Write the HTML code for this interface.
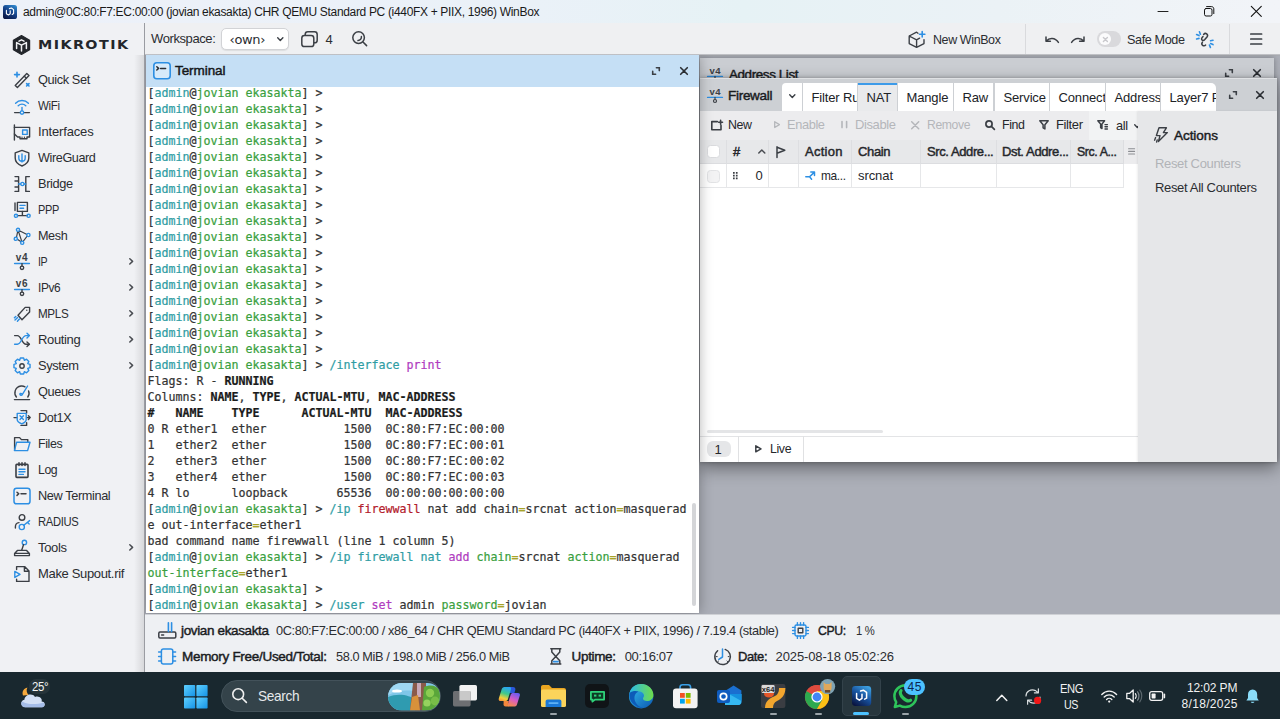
<!DOCTYPE html>
<html><head><meta charset="utf-8"><title>WinBox</title>
<style>
*{box-sizing:border-box;margin:0;padding:0}
html,body{width:1280px;height:719px;overflow:hidden;background:#acafb8;font-family:"Liberation Sans",sans-serif;color:#1f2023}
.abs{position:absolute}
svg{display:block;overflow:visible}
#termbody{left:0;top:32px;width:553px;height:526px;overflow:hidden;background:#fff}
pre.tl{position:absolute;left:1.5px;-webkit-text-stroke:0.22px;font-family:"DejaVu Sans Mono","Liberation Mono",monospace;font-size:11.63px;line-height:16px;height:16px;color:#333;white-space:pre}
pre.tl b{font-weight:bold;color:#1b1b1b}
.c{color:#2f9da4}.g{color:#3a9f40}.m{color:#b03cc0}.r{color:#b3202c}.y{color:#a8a428}
</style></head>
<body>
<div class="abs" style="left:0px;top:0px;width:1280px;height:23px;background:linear-gradient(90deg,#edf1f9 0%,#eaf1f8 42%,#e6f2f5 58%,#ebf2f6 78%,#f2f4f8 100%);"></div>
<div class="abs" style="left:3px;top:5px"><svg width="14" height="14" viewBox="0 0 14 14" fill="none" stroke-width="1.3" stroke-linecap="round" stroke-linejoin="round"><defs><linearGradient id="wbg" x1="0.8" y1="0" x2="0.2" y2="1"><stop offset="0" stop-color="#2f86cc"/><stop offset="0.5" stop-color="#143f86"/><stop offset="1" stop-color="#0a1440"/></linearGradient></defs><rect x="0" y="0" width="14" height="14" rx="2.6" fill="url(#wbg)"/><path d="M3.4 5.4 V8.8 L5.4 10 L7.2 8.8 V5.8 M6.4 3.6 L8.4 3 L10.6 4.6 V8.6 L9.2 9.4" stroke="#fff" stroke-width="1.1" fill="none"/></svg></div>
<div class="abs" style="left:23px;top:3.5px;font-size:12px;line-height:16px;height:16px;color:#1a1a1a;white-space:nowrap;letter-spacing:-0.329px;">admin@0C:80:F7:EC:00:00 (jovian ekasakta) CHR QEMU Standard PC (i440FX + PIIX, 1996) WinBox</div>
<div class="abs" style="left:1158px;top:11px"><svg width="10" height="1" viewBox="0 0 10 1" fill="none" stroke-width="1.3" stroke-linecap="round" stroke-linejoin="round"><path d="M0 0.5 H10" stroke="#222" stroke-width="1"/></svg></div>
<div class="abs" style="left:1204px;top:6px"><svg width="10" height="10" viewBox="0 0 10 10" fill="none" stroke-width="1.3" stroke-linecap="round" stroke-linejoin="round"><rect x="0.5" y="2.5" width="7.5" height="7.5" rx="1.6" stroke="#111" stroke-width="1"/><path d="M2.6 0.6 H7.6 C8.8 0.6 9.8 1.6 9.8 2.8 V7.6" stroke="#111" stroke-width="1"/></svg></div>
<div class="abs" style="left:1251px;top:6px"><svg width="10.6" height="10.6" viewBox="0 0 10.6 10.6" fill="none" stroke-width="1.3" stroke-linecap="round" stroke-linejoin="round"><path d="M0.3 0.3 L10.3 10.3 M10.3 0.3 L0.3 10.3" stroke="#111" stroke-width="1.1"/></svg></div>
<div class="abs" style="left:0px;top:23px;width:145px;height:649px;background:#f0f1f4;border-right:1px solid #9a9ca2;"></div>
<div class="abs" style="left:134px;top:55px;width:10px;height:617px;background:linear-gradient(90deg,rgba(0,0,0,0),rgba(0,0,0,0.10));"></div>
<div class="abs" style="left:12px;top:34.8px"><svg width="19" height="20" viewBox="0 0 19 20" fill="none" stroke-width="1.3" stroke-linecap="round" stroke-linejoin="round"><path d="M9.5 0.6 L17.6 5.2 V14.8 L9.5 19.4 L1.4 14.8 V5.2 Z" fill="#23262b" stroke="#23262b" stroke-width="1.2"/><path d="M4.6 13.6 V7.6 L9.5 10.2 L14.4 7.6 V13.6 M9.5 10.2 V16 M7 6.2 L9.5 4.8 L12 6.2" stroke="#f1f2f4" stroke-width="1.5" fill="none"/></svg></div>
<div class="abs" style="left:38px;top:36.3px;font-size:13px;line-height:17px;height:17px;color:#23262b;white-space:nowrap;font-weight:700;font-family:'DejaVu Sans','Liberation Sans',sans-serif;letter-spacing:1.3px;transform:scaleX(1.1);transform-origin:0 50%;">MIKROTIK</div>
<div class="abs" style="left:13px;top:70.8px"><svg width="18" height="18" viewBox="0 0 18 18" fill="none" stroke-width="1.4" stroke-linecap="round" stroke-linejoin="round"><path d="M2.2 14.6 L13.8 2.6 L16 4.6 L4.4 16.6 Z" stroke="#3b3f45"/><path d="M11.3 5.2 L13.4 7.2" stroke="#3b3f45"/><path d="M4 1.2 V6 M1.6 3.6 H6.4" stroke="#2d8fe3" stroke-width="1.6"/><path d="M13.6 12.6 L16 15 M16 12.6 L13.6 15" stroke="#2d8fe3" stroke-width="1.6"/></svg></div>
<div class="abs" style="left:38px;top:71.3px;font-size:13px;line-height:17px;height:17px;color:#2b2d31;white-space:nowrap;letter-spacing:-0.400px;transform:scaleX(0.9820);transform-origin:0 50%;">Quick Set</div>
<div class="abs" style="left:13px;top:96.8px"><svg width="18" height="18" viewBox="0 0 18 18" fill="none" stroke-width="1.4" stroke-linecap="round" stroke-linejoin="round"><path d="M2.6 6.2 C6 2.6 12 2.6 15.4 6.2" stroke="#2d8fe3"/><path d="M5.2 8.8 C7.4 6.6 10.6 6.6 12.8 8.8" stroke="#2d8fe3"/><path d="M9 10.4 V14" stroke="#2d8fe3"/><path d="M1.6 15.6 H16.4" stroke="#3b3f45"/><circle cx="9" cy="15.6" r="1.7" fill="#f1f2f4" stroke="#2d8fe3"/></svg></div>
<div class="abs" style="left:38px;top:97.3px;font-size:13px;line-height:17px;height:17px;color:#2b2d31;white-space:nowrap;letter-spacing:-0.400px;transform:scaleX(0.8871);transform-origin:0 50%;">WiFi</div>
<div class="abs" style="left:13px;top:122.8px"><svg width="18" height="18" viewBox="0 0 18 18" fill="none" stroke-width="1.4" stroke-linecap="round" stroke-linejoin="round"><path d="M1.4 2 V17" stroke="#3b3f45"/><path d="M1.4 4.4 H16.6 V14 H14 V15.8 H7 V14 H4.6 L1.4 11" stroke="#3b3f45"/><path d="M9 14 V15.4 M11.4 14 V15.4" stroke="#3b3f45" stroke-width="1"/><rect x="9.6" y="7" width="4.6" height="4.4" stroke="#2d8fe3"/></svg></div>
<div class="abs" style="left:38px;top:123.3px;font-size:13px;line-height:17px;height:17px;color:#2b2d31;white-space:nowrap;letter-spacing:-0.155px;">Interfaces</div>
<div class="abs" style="left:13px;top:148.8px"><svg width="18" height="18" viewBox="0 0 18 18" fill="none" stroke-width="1.4" stroke-linecap="round" stroke-linejoin="round"><path d="M9 1.4 L15.8 3.8 V9 C15.8 13 12.6 15.6 9 17 C5.4 15.6 2.2 13 2.2 9 V3.8 Z" stroke="#3b3f45"/><path d="M9 5 V13 M5.8 6.6 V9 C5.8 11 7.2 12.2 9 12.2 C10.8 12.2 12.2 11 12.2 9 V6.6" stroke="#2d8fe3"/></svg></div>
<div class="abs" style="left:38px;top:149.3px;font-size:13px;line-height:17px;height:17px;color:#2b2d31;white-space:nowrap;letter-spacing:-0.400px;transform:scaleX(0.9705);transform-origin:0 50%;">WireGuard</div>
<div class="abs" style="left:13px;top:174.8px"><svg width="18" height="18" viewBox="0 0 18 18" fill="none" stroke-width="1.4" stroke-linecap="round" stroke-linejoin="round"><path d="M2 1.6 H5.6 V16.4 H2 M2 6 H5.6 M2 12 H5.6" stroke="#3b3f45"/><path d="M16.4 1.6 H12.8 V16.4 H16.4" stroke="#3b3f45"/><path d="M5.6 9 H12.8" stroke="#2d8fe3"/><circle cx="9.4" cy="9" r="1.6" fill="#f1f2f4" stroke="#2d8fe3"/></svg></div>
<div class="abs" style="left:38px;top:175.3px;font-size:13px;line-height:17px;height:17px;color:#2b2d31;white-space:nowrap;letter-spacing:-0.400px;transform:scaleX(0.9838);transform-origin:0 50%;">Bridge</div>
<div class="abs" style="left:13px;top:200.8px"><svg width="18" height="18" viewBox="0 0 18 18" fill="none" stroke-width="1.4" stroke-linecap="round" stroke-linejoin="round"><path d="M2 2 V9.6 M4.4 1.4 H14.4 V10.4 H4.4 Z" stroke="#3b3f45"/><path d="M7 4.4 H12 M7 7.2 H10.6" stroke="#2d8fe3"/><path d="M9.4 10.4 V14.6 M4.4 14.6 H14.4" stroke="#3b3f45"/><circle cx="3" cy="14.8" r="1.6" stroke="#2d8fe3"/><circle cx="15.6" cy="14.8" r="1.6" stroke="#2d8fe3"/></svg></div>
<div class="abs" style="left:38px;top:201.3px;font-size:13px;line-height:17px;height:17px;color:#2b2d31;white-space:nowrap;letter-spacing:-0.400px;transform:scaleX(0.8447);transform-origin:0 50%;">PPP</div>
<div class="abs" style="left:13px;top:226.8px"><svg width="18" height="18" viewBox="0 0 18 18" fill="none" stroke-width="1.4" stroke-linecap="round" stroke-linejoin="round"><path d="M5 3 L15 8 L9.2 15.6 Z M3.2 11.6 L9.2 15.6 M5 3 L3.2 11.6" stroke="#3b3f45" stroke-width="1.2"/><circle cx="5" cy="2.8" r="1.6" fill="#f1f2f4" stroke="#2d8fe3"/><circle cx="15.4" cy="8" r="1.6" fill="#f1f2f4" stroke="#2d8fe3"/><circle cx="2.8" cy="11.8" r="1.6" fill="#f1f2f4" stroke="#2d8fe3"/><circle cx="9.2" cy="15.8" r="1.6" fill="#f1f2f4" stroke="#2d8fe3"/></svg></div>
<div class="abs" style="left:38px;top:227.3px;font-size:13px;line-height:17px;height:17px;color:#2b2d31;white-space:nowrap;letter-spacing:-0.400px;transform:scaleX(0.9707);transform-origin:0 50%;">Mesh</div>
<div class="abs" style="left:13px;top:252.8px"><svg width="18" height="18" viewBox="0 0 18 18" fill="none" stroke-width="1.4" stroke-linecap="round" stroke-linejoin="round"><text x="9" y="7.6" text-anchor="middle" font-family="Liberation Sans,sans-serif" font-size="10" font-weight="bold" fill="#3b3f45" stroke="none" letter-spacing="0.7">v4</text><path d="M1.6 10.6 H16.4" stroke="#2d8fe3" stroke-width="1.5"/><path d="M9 10.6 V13" stroke="#3b3f45"/><circle cx="9" cy="14.8" r="1.7" stroke="#3b3f45"/></svg></div>
<div class="abs" style="left:38px;top:253.3px;font-size:13px;line-height:17px;height:17px;color:#2b2d31;white-space:nowrap;letter-spacing:-0.400px;transform:scaleX(0.8153);transform-origin:0 50%;">IP</div>
<div class="abs" style="left:129.3px;top:258.4px"><svg width="4.4" height="6.8" viewBox="0 0 4.4 6.8" fill="none" stroke-width="1.3" stroke-linecap="round" stroke-linejoin="round"><path d="M0.8 0.8 L3.6 3.4 L0.8 6" stroke="#4a4d52" stroke-width="1.5"/></svg></div>
<div class="abs" style="left:13px;top:278.8px"><svg width="18" height="18" viewBox="0 0 18 18" fill="none" stroke-width="1.4" stroke-linecap="round" stroke-linejoin="round"><text x="9" y="7.6" text-anchor="middle" font-family="Liberation Sans,sans-serif" font-size="10" font-weight="bold" fill="#3b3f45" stroke="none" letter-spacing="0.7">v6</text><path d="M1.6 10.6 H16.4" stroke="#2d8fe3" stroke-width="1.5"/><path d="M9 10.6 V13" stroke="#3b3f45"/><circle cx="9" cy="14.8" r="1.7" stroke="#3b3f45"/></svg></div>
<div class="abs" style="left:38px;top:279.3px;font-size:13px;line-height:17px;height:17px;color:#2b2d31;white-space:nowrap;letter-spacing:-0.400px;transform:scaleX(0.9147);transform-origin:0 50%;">IPv6</div>
<div class="abs" style="left:129.3px;top:284.4px"><svg width="4.4" height="6.8" viewBox="0 0 4.4 6.8" fill="none" stroke-width="1.3" stroke-linecap="round" stroke-linejoin="round"><path d="M0.8 0.8 L3.6 3.4 L0.8 6" stroke="#4a4d52" stroke-width="1.5"/></svg></div>
<div class="abs" style="left:13px;top:304.8px"><svg width="18" height="18" viewBox="0 0 18 18" fill="none" stroke-width="1.4" stroke-linecap="round" stroke-linejoin="round"><path d="M5 10.2 L12.2 2.4 H16.6 V7 L9 14.8 Z" stroke="#3b3f45"/><circle cx="13.8" cy="5.2" r="0.7" fill="#3b3f45" stroke="none"/><path d="M4.6 12.4 L2 15 M6.4 14 L4.4 16.2 M2.8 11.4 L1.4 12.8" stroke="#2d8fe3"/></svg></div>
<div class="abs" style="left:38px;top:305.3px;font-size:13px;line-height:17px;height:17px;color:#2b2d31;white-space:nowrap;letter-spacing:-0.400px;transform:scaleX(0.8975);transform-origin:0 50%;">MPLS</div>
<div class="abs" style="left:129.3px;top:310.4px"><svg width="4.4" height="6.8" viewBox="0 0 4.4 6.8" fill="none" stroke-width="1.3" stroke-linecap="round" stroke-linejoin="round"><path d="M0.8 0.8 L3.6 3.4 L0.8 6" stroke="#4a4d52" stroke-width="1.5"/></svg></div>
<div class="abs" style="left:13px;top:330.8px"><svg width="18" height="18" viewBox="0 0 18 18" fill="none" stroke-width="1.4" stroke-linecap="round" stroke-linejoin="round"><path d="M1.6 4.6 H4.4 C8.4 4.6 8.8 13.2 13 13.2 H16" stroke="#3b3f45"/><path d="M14 11 L16.4 13.2 L14 15.6" stroke="#3b3f45"/><path d="M1.6 13.2 H4.4 C8.4 13.2 8.8 4.6 13 4.6 H16" stroke="#2d8fe3"/><path d="M14 2.2 L16.4 4.6 L14 7" stroke="#2d8fe3"/></svg></div>
<div class="abs" style="left:38px;top:331.3px;font-size:13px;line-height:17px;height:17px;color:#2b2d31;white-space:nowrap;letter-spacing:-0.352px;">Routing</div>
<div class="abs" style="left:129.3px;top:336.4px"><svg width="4.4" height="6.8" viewBox="0 0 4.4 6.8" fill="none" stroke-width="1.3" stroke-linecap="round" stroke-linejoin="round"><path d="M0.8 0.8 L3.6 3.4 L0.8 6" stroke="#4a4d52" stroke-width="1.5"/></svg></div>
<div class="abs" style="left:13px;top:356.8px"><svg width="18" height="18" viewBox="0 0 18 18" fill="none" stroke-width="1.4" stroke-linecap="round" stroke-linejoin="round"><path d="M7.37 0.96 L10.63 0.96 L11.36 3.27 L11.39 3.28 L13.53 2.17 L15.83 4.47 L14.72 6.61 L14.73 6.64 L17.04 7.37 L17.04 10.63 L14.73 11.36 L14.72 11.39 L15.83 13.53 L13.53 15.83 L11.39 14.72 L11.36 14.73 L10.63 17.04 L7.37 17.04 L6.64 14.73 L6.61 14.72 L4.47 15.83 L2.17 13.53 L3.28 11.39 L3.27 11.36 L0.96 10.63 L0.96 7.37 L3.27 6.64 L3.28 6.61 L2.17 4.47 L4.47 2.17 L6.61 3.28 L6.64 3.27 Z" stroke="#2d8fe3" stroke-linejoin="round"/><circle cx="9" cy="9" r="2.2" stroke="#3b3f45"/></svg></div>
<div class="abs" style="left:38px;top:357.3px;font-size:13px;line-height:17px;height:17px;color:#2b2d31;white-space:nowrap;letter-spacing:-0.400px;transform:scaleX(0.9893);transform-origin:0 50%;">System</div>
<div class="abs" style="left:129.3px;top:362.4px"><svg width="4.4" height="6.8" viewBox="0 0 4.4 6.8" fill="none" stroke-width="1.3" stroke-linecap="round" stroke-linejoin="round"><path d="M0.8 0.8 L3.6 3.4 L0.8 6" stroke="#4a4d52" stroke-width="1.5"/></svg></div>
<div class="abs" style="left:13px;top:382.8px"><svg width="18" height="18" viewBox="0 0 18 18" fill="none" stroke-width="1.4" stroke-linecap="round" stroke-linejoin="round"><path d="M3.4 14 C0.6 10.6 1.6 4 8 3 C9.6 2.8 11 3.2 12 3.8 M15.6 8 C16.4 10 16 12.4 14.8 14" stroke="#3b3f45"/><path d="M14.6 3 L9.4 11.4 C8.8 12.6 7.4 12.6 7 11.6 C6.6 10.4 7.8 9.6 9.4 11.4" stroke="#2d8fe3"/><path d="M1.4 16.6 H16.6" stroke="#3b3f45"/></svg></div>
<div class="abs" style="left:38px;top:383.3px;font-size:13px;line-height:17px;height:17px;color:#2b2d31;white-space:nowrap;letter-spacing:-0.400px;transform:scaleX(0.9806);transform-origin:0 50%;">Queues</div>
<div class="abs" style="left:13px;top:408.8px"><svg width="18" height="18" viewBox="0 0 18 18" fill="none" stroke-width="1.4" stroke-linecap="round" stroke-linejoin="round"><path d="M1 8.6 H4 M13.8 8.6 H17.2 M15.4 6.8 L17.2 8.6 L15.4 10.4" stroke="#3b3f45"/><path d="M8 1.6 H13.6 V4 M13.6 13.6 V16.4 H8" stroke="#3b3f45"/><path d="M4.2 4.4 H13.2 V10.6 C13.2 12.6 11 14 8.8 14.8 C6.4 14 4.2 12.6 4.2 10.6 Z" stroke="#2d8fe3"/><path d="M7 6.8 L10.4 10.4 M10.4 6.8 L7 10.4" stroke="#2d8fe3"/></svg></div>
<div class="abs" style="left:38px;top:409.3px;font-size:13px;line-height:17px;height:17px;color:#2b2d31;white-space:nowrap;letter-spacing:-0.400px;transform:scaleX(0.9757);transform-origin:0 50%;">Dot1X</div>
<div class="abs" style="left:13px;top:434.8px"><svg width="18" height="18" viewBox="0 0 18 18" fill="none" stroke-width="1.4" stroke-linecap="round" stroke-linejoin="round"><path d="M1.6 14.6 V2.6 H6.6 L8.4 4.6 H14.8 V7" stroke="#3b3f45"/><path d="M3.6 7.2 H17 L14.6 15.6 H1.4 Z" stroke="#2d8fe3"/></svg></div>
<div class="abs" style="left:38px;top:435.3px;font-size:13px;line-height:17px;height:17px;color:#2b2d31;white-space:nowrap;letter-spacing:-0.400px;transform:scaleX(0.9554);transform-origin:0 50%;">Files</div>
<div class="abs" style="left:13px;top:460.8px"><svg width="18" height="18" viewBox="0 0 18 18" fill="none" stroke-width="1.4" stroke-linecap="round" stroke-linejoin="round"><rect x="3" y="3.4" width="12" height="13" rx="0.8" stroke="#3b3f45" stroke-width="1.6"/><path d="M6 1.8 V4.6 M9 1.8 V4.6 M12 1.8 V4.6" stroke="#3b3f45" stroke-width="1.5"/><path d="M6 8.2 H12 M6 10.8 H12 M6 13.4 H10.4" stroke="#2d8fe3"/></svg></div>
<div class="abs" style="left:38px;top:461.3px;font-size:13px;line-height:17px;height:17px;color:#2b2d31;white-space:nowrap;letter-spacing:-0.400px;transform:scaleX(0.9424);transform-origin:0 50%;">Log</div>
<div class="abs" style="left:13px;top:486.8px"><svg width="18" height="18" viewBox="0 0 18 18" fill="none" stroke-width="1.4" stroke-linecap="round" stroke-linejoin="round"><rect x="1" y="1.2" width="16" height="15.6" rx="2.6" stroke="#2d8fe3" stroke-width="1.5"/><path d="M4 5.2 L5.8 6.8 L4 8.4 M8 6.8 H13" stroke="#3b3f45" stroke-width="1.5"/></svg></div>
<div class="abs" style="left:38px;top:487.3px;font-size:13px;line-height:17px;height:17px;color:#2b2d31;white-space:nowrap;letter-spacing:-0.400px;transform:scaleX(0.9809);transform-origin:0 50%;">New Terminal</div>
<div class="abs" style="left:13px;top:512.8px"><svg width="18" height="18" viewBox="0 0 18 18" fill="none" stroke-width="1.4" stroke-linecap="round" stroke-linejoin="round"><circle cx="9" cy="4.4" r="2.8" stroke="#3b3f45"/><path d="M2.4 15 V13.8 C2.4 11.4 4 9.8 6 9.6" stroke="#3b3f45"/><circle cx="8.8" cy="14" r="2.6" stroke="#2d8fe3"/><path d="M10.8 12.2 L16.6 7.6 M14.6 9.4 L16.2 11" stroke="#2d8fe3"/></svg></div>
<div class="abs" style="left:38px;top:513.3px;font-size:13px;line-height:17px;height:17px;color:#2b2d31;white-space:nowrap;letter-spacing:-0.400px;transform:scaleX(0.8637);transform-origin:0 50%;">RADIUS</div>
<div class="abs" style="left:13px;top:538.8px"><svg width="18" height="18" viewBox="0 0 18 18" fill="none" stroke-width="1.4" stroke-linecap="round" stroke-linejoin="round"><circle cx="11.4" cy="3.4" r="2.2" stroke="#2d8fe3"/><path d="M10.6 5.6 L8.6 11.4" stroke="#3b3f45"/><path d="M4.4 11.4 H13.6 L16.4 14.4 V16.6 H1.6 V14.4 Z M1.6 14.4 H16.4" stroke="#3b3f45"/></svg></div>
<div class="abs" style="left:38px;top:539.3px;font-size:13px;line-height:17px;height:17px;color:#2b2d31;white-space:nowrap;letter-spacing:-0.315px;">Tools</div>
<div class="abs" style="left:129.3px;top:544.4px"><svg width="4.4" height="6.8" viewBox="0 0 4.4 6.8" fill="none" stroke-width="1.3" stroke-linecap="round" stroke-linejoin="round"><path d="M0.8 0.8 L3.6 3.4 L0.8 6" stroke="#4a4d52" stroke-width="1.5"/></svg></div>
<div class="abs" style="left:13px;top:564.8px"><svg width="18" height="18" viewBox="0 0 18 18" fill="none" stroke-width="1.4" stroke-linecap="round" stroke-linejoin="round"><path d="M3.6 4.6 V1.6 H11.6 L16 6 V16.4 H3.6 V14.2 M11.4 1.8 V6.2 H15.8" stroke="#3b3f45"/><path d="M1.8 6.4 L7 9.4 L1.8 12.4 Z" stroke="#2d8fe3"/></svg></div>
<div class="abs" style="left:38px;top:565.3px;font-size:13px;line-height:17px;height:17px;color:#2b2d31;white-space:nowrap;letter-spacing:-0.339px;">Make Supout.rif</div>
<div class="abs" style="left:145px;top:23px;width:1135px;height:32px;background:#eff0f2;"></div>
<div class="abs" style="left:145px;top:54px;width:1135px;height:2px;background:linear-gradient(180deg,#c9cace,#9fa2a9);"></div>
<div class="abs" style="left:151px;top:30.3px;font-size:13px;line-height:17px;height:17px;color:#2b2d31;white-space:nowrap;letter-spacing:-0.400px;">Workspace:</div>
<div class="abs" style="left:220.5px;top:28px;width:68.5px;height:21.5px;background:#fff;border:1px solid #d2d3d6;border-radius:5px;box-shadow:0 1px 1px rgba(0,0,0,.08);"></div>
<div class="abs" style="left:229.5px;top:30.7px;font-size:13px;line-height:17px;height:17px;color:#2b2d31;white-space:nowrap;letter-spacing:-0.309px;font-family:'DejaVu Sans','Liberation Sans',sans-serif;">‹own›</div>
<div class="abs" style="left:277px;top:37px"><svg width="6.6" height="4.2" viewBox="0 0 6.6 4.2" fill="none" stroke-width="1.3" stroke-linecap="round" stroke-linejoin="round"><path d="M0.7 0.8 L3.3 3.4 L5.9 0.8" stroke="#3b3f45" stroke-width="1.4"/></svg></div>
<div class="abs" style="left:300.5px;top:30.5px"><svg width="17" height="16.4" viewBox="0 0 17 16.4" fill="none" stroke-width="1.5" stroke-linecap="round" stroke-linejoin="round"><rect x="4.2" y="0.8" width="12" height="11" rx="2.6" stroke="#3b3f45"/><rect x="0.8" y="4.6" width="12" height="11" rx="2.6" stroke="#3b3f45" fill="#f0f0f2"/></svg></div>
<div class="abs" style="left:325.5px;top:30.5px;font-size:13px;line-height:17px;height:17px;color:#2b2d31;white-space:nowrap;">4</div>
<div class="abs" style="left:352px;top:31px"><svg width="15" height="15" viewBox="0 0 15 15" fill="none" stroke-width="1.5" stroke-linecap="round" stroke-linejoin="round"><circle cx="6.6" cy="6.6" r="5.8" stroke="#3b3f45"/><path d="M11 11 L14.6 14.6" stroke="#3b3f45"/><path d="M9.4 5.6 C9.6 7.8 8.2 9.4 6 9.6" stroke="#3b3f45"/></svg></div>
<div class="abs" style="left:908px;top:30.5px"><svg width="17.6" height="17" viewBox="0 0 17.6 17" fill="none" stroke-width="1.4" stroke-linecap="round" stroke-linejoin="round"><path d="M10 2.2 L8.6 1.2 L1.2 5 V12.6 L8.6 16.4 L16 12.6 V8.6 M1.2 5 L8.6 8.8 L11.6 7.2 M8.6 8.8 V16.4" stroke="#3b3f45"/><path d="M14.2 0.6 V6 M11.5 3.3 H16.9" stroke="#2d8fe3" stroke-width="1.6"/></svg></div>
<div class="abs" style="left:932.7px;top:30.5px;font-size:13px;line-height:17px;height:17px;color:#2b2d31;white-space:nowrap;letter-spacing:-0.400px;transform:scaleX(0.9587);transform-origin:0 50%;">New WinBox</div>
<div class="abs" style="left:1025px;top:24px;width:1px;height:30px;background:#d9dadd;"></div>
<div class="abs" style="left:1044.5px;top:35px"><svg width="14" height="8" viewBox="0 0 14 8" fill="none" stroke-width="1.5" stroke-linecap="round" stroke-linejoin="round"><path d="M1 2 V6.2 H5.4 M1.4 6 C4 2.6 10 2 13.4 7.4" stroke="#3b3f45"/></svg></div>
<div class="abs" style="left:1070.5px;top:35px"><svg width="14" height="8" viewBox="0 0 14 8" fill="none" stroke-width="1.5" stroke-linecap="round" stroke-linejoin="round"><path d="M13 2 V6.2 H8.6 M12.6 6 C10 2.6 4 2 0.6 7.4" stroke="#3b3f45"/></svg></div>
<div class="abs" style="left:1097px;top:31px;width:23.6px;height:16px;background:#d9d9dc;border-radius:8px;"></div>
<div class="abs" style="left:1098.6px;top:32.6px;width:12.8px;height:12.8px;background:#fbfbfc;border-radius:7px;"><svg width="12.8" height="12.8" viewBox="0 0 12.8 12.8" fill="none" stroke-width="1.3" stroke-linecap="round" stroke-linejoin="round"><path d="M4.4 4.4 L8.4 8.4 M8.4 4.4 L4.4 8.4" stroke="#c9c9cd" stroke-width="1.4"/></svg></div>
<div class="abs" style="left:1127px;top:30.7px;font-size:13px;line-height:17px;height:17px;color:#2b2d31;white-space:nowrap;letter-spacing:-0.400px;transform:scaleX(0.9719);transform-origin:0 50%;">Safe Mode</div>
<div class="abs" style="left:1196px;top:30.5px"><svg width="17.6" height="17" viewBox="0 0 17.6 17" fill="none" stroke-width="1.5" stroke-linecap="round" stroke-linejoin="round"><path d="M7.6 3.4 C9.6 1 12.8 3.6 11 6 L8.8 8.6 C7 10.6 4.6 8.6 6 6.8 L7 5.6 M9.6 14 C7.8 16.2 4.6 13.6 6.4 11.2" stroke="#3b3f45"/><path d="M3.4 0.8 L4.4 3.2 M0.6 3.6 L3 4.6 M0.6 8 L3 7.4 M14.4 16.4 L13.4 14 M17 13.6 L14.6 12.6 M17 9.2 L14.6 9.8" stroke="#2d8fe3" stroke-width="1.6"/></svg></div>
<div class="abs" style="left:1229px;top:24px;width:1px;height:30px;background:#d9dadd;"></div>
<div class="abs" style="left:1249.5px;top:33px"><svg width="12.4" height="12" viewBox="0 0 12.4 12" fill="none" stroke-width="1.3" stroke-linecap="round" stroke-linejoin="round"><path d="M0.8 1 H11.6 M0.8 6 H11.6 M0.8 11 H11.6" stroke="#3b3f45" stroke-width="1.7"/></svg></div>
<div class="abs" style="left:145px;top:56px;width:1135px;height:558px;background:#acafb8;"></div>
<div class="abs" style="left:0;top:0;width:1280px;height:719px;clip-path:inset(55px 0 105px 145px)">
<div class="abs" style="left:700px;top:57.5px;width:574px;height:30px;overflow:hidden;box-shadow:0 0 6px rgba(0,0,0,.3)"><div class="abs" style="left:0px;top:0px;width:574px;height:30px;background:#cacdd2;"><div class="abs" style="left:7px;top:9.5px"><svg width="16" height="15" viewBox="0 0 16 15" fill="none" stroke-width="1.2" stroke-linecap="round" stroke-linejoin="round"><text x="8.3" y="6.8" text-anchor="middle" font-family="Liberation Sans,sans-serif" font-size="9.5" font-weight="bold" fill="#3b3f45" stroke="none" letter-spacing="0.6">v4</text><path d="M0.6 9.4 H15.4" stroke="#2d8fe3" stroke-width="1.4"/><path d="M8 9.4 V11.4" stroke="#3b3f45"/><circle cx="8" cy="13" r="1.5" stroke="#3b3f45" fill="#cacdd2"/></svg></div><div class="abs" style="left:29px;top:8px;font-size:13.5px;line-height:18px;height:18px;color:#1a1c1f;white-space:nowrap;-webkit-text-stroke:0.45px #1a1c1f;letter-spacing:-0.400px;transform:scaleX(0.9943);transform-origin:0 50%;">Address List</div><div class="abs" style="left:525px;top:11.5px"><svg width="8" height="8" viewBox="0 0 8 8" fill="none" stroke-width="1.3" stroke-linecap="round" stroke-linejoin="round"><path d="M4.4 0.7 H7.3 V3.6 M3.6 7.3 H0.7 V4.4" stroke="#3b3f45" stroke-width="1.6" stroke-linejoin="miter"/></svg></div><div class="abs" style="left:553px;top:11.5px"><svg width="8" height="8" viewBox="0 0 8 8" fill="none" stroke-width="1.3" stroke-linecap="round" stroke-linejoin="round"><path d="M0.7 0.7 L7.3 7.3 M7.3 0.7 L0.7 7.3" stroke="#2a2d32" stroke-width="1.6"/></svg></div></div></div>
<div class="abs" style="left:700px;top:78px;width:576.5px;height:384px;background:#fff;box-shadow:0 6px 16px rgba(0,0,0,.42),0 0 4px rgba(0,0,0,.28)"><div class="abs" style="left:0px;top:0px;width:576.5px;height:32.5px;background:#cdd0d4;border-top:1px solid #dfe1e4;"></div>
<div class="abs" style="left:7px;top:10px"><svg width="16" height="15" viewBox="0 0 16 15" fill="none" stroke-width="1.2" stroke-linecap="round" stroke-linejoin="round"><text x="8.3" y="6.8" text-anchor="middle" font-family="Liberation Sans,sans-serif" font-size="9.5" font-weight="bold" fill="#3b3f45" stroke="none" letter-spacing="0.6">v4</text><path d="M0.6 9.4 H15.4" stroke="#2d8fe3" stroke-width="1.4"/><path d="M8 9.4 V11.4" stroke="#3b3f45"/><circle cx="8" cy="13" r="1.5" stroke="#3b3f45" fill="#cdd0d4"/></svg></div>
<div class="abs" style="left:28px;top:9px;font-size:13.5px;line-height:18px;height:18px;color:#1a1c1f;white-space:nowrap;-webkit-text-stroke:0.45px #1a1c1f;letter-spacing:-0.288px;">Firewall</div>
<div class="abs" style="left:529px;top:13px"><svg width="8" height="8" viewBox="0 0 8 8" fill="none" stroke-width="1.3" stroke-linecap="round" stroke-linejoin="round"><path d="M4.4 0.7 H7.3 V3.6 M3.6 7.3 H0.7 V4.4" stroke="#3b3f45" stroke-width="1.6" stroke-linejoin="miter"/></svg></div><div class="abs" style="left:556px;top:13px"><svg width="8" height="8" viewBox="0 0 8 8" fill="none" stroke-width="1.3" stroke-linecap="round" stroke-linejoin="round"><path d="M0.7 0.7 L7.3 7.3 M7.3 0.7 L0.7 7.3" stroke="#2a2d32" stroke-width="1.6"/></svg></div>
<div class="abs" style="left:82px;top:5px;width:20px;height:27.5px;background:#fff;overflow:hidden;border-top-left-radius:4px;"><div class="abs" style="left:7px;top:11px"><svg width="6.6" height="4.2" viewBox="0 0 6.6 4.2" fill="none" stroke-width="1.3" stroke-linecap="round" stroke-linejoin="round"><path d="M0.7 0.8 L3.3 3.4 L5.9 0.8" stroke="#3b3f45" stroke-width="1.4"/></svg></div></div>
<div class="abs" style="left:103px;top:5px;width:54px;height:27.5px;background:#fff;overflow:hidden;"><div class="abs" style="left:8.5px;top:5.7px;font-size:13px;line-height:17px;height:17px;color:#202226;white-space:nowrap;letter-spacing:-0.15px;">Filter Rules</div></div>
<div class="abs" style="left:158px;top:5px;width:39px;height:27.5px;background:#e9eaec;overflow:hidden;border-top:2px solid #3d9be9;"><div class="abs" style="left:8.5px;top:3.7px;font-size:13px;line-height:17px;height:17px;color:#202226;white-space:nowrap;letter-spacing:-0.15px;">NAT</div></div>
<div class="abs" style="left:198px;top:5px;width:55px;height:27.5px;background:#fff;overflow:hidden;"><div class="abs" style="left:8.5px;top:5.7px;font-size:13px;line-height:17px;height:17px;color:#202226;white-space:nowrap;letter-spacing:-0.15px;">Mangle</div></div>
<div class="abs" style="left:254px;top:5px;width:39px;height:27.5px;background:#fff;overflow:hidden;"><div class="abs" style="left:8.5px;top:5.7px;font-size:13px;line-height:17px;height:17px;color:#202226;white-space:nowrap;letter-spacing:-0.15px;">Raw</div></div>
<div class="abs" style="left:295px;top:5px;width:54px;height:27.5px;background:#fff;overflow:hidden;"><div class="abs" style="left:8.5px;top:5.7px;font-size:13px;line-height:17px;height:17px;color:#202226;white-space:nowrap;letter-spacing:-0.15px;">Service Ports</div></div>
<div class="abs" style="left:350px;top:5px;width:55px;height:27.5px;background:#fff;overflow:hidden;"><div class="abs" style="left:8.5px;top:5.7px;font-size:13px;line-height:17px;height:17px;color:#202226;white-space:nowrap;letter-spacing:-0.15px;">Connections</div></div>
<div class="abs" style="left:406px;top:5px;width:54px;height:27.5px;background:#fff;overflow:hidden;"><div class="abs" style="left:8.5px;top:5.7px;font-size:13px;line-height:17px;height:17px;color:#202226;white-space:nowrap;letter-spacing:-0.15px;">Address Lists</div></div>
<div class="abs" style="left:461px;top:5px;width:55px;height:27.5px;background:#fff;overflow:hidden;border-top-right-radius:5px;"><div class="abs" style="left:8.5px;top:5.7px;font-size:13px;line-height:17px;height:17px;color:#202226;white-space:nowrap;letter-spacing:-0.15px;">Layer7 Protocols</div></div>
<div class="abs" style="left:0px;top:32.5px;width:576.5px;height:29px;background:#ececee;"></div>
<div class="abs" style="left:389px;top:32.5px;width:50px;height:29px;background:#f2f3f4;"></div>
<div class="abs" style="left:10.5px;top:41.6px"><svg width="12" height="10.4" viewBox="0 0 12 10.4" fill="none" stroke-width="1.6" stroke-linecap="round" stroke-linejoin="round"><path d="M6.4 1.6 H0.8 V9.8 H10 V5.4" stroke="#3b3f45"/><path d="M9.6 0.4 V4.2 M7.7 2.3 H11.5" stroke="#3b3f45"/></svg></div>
<div class="abs" style="left:28px;top:37.8px;font-size:13.5px;line-height:18px;height:18px;color:#25272b;white-space:nowrap;letter-spacing:-0.400px;transform:scaleX(0.9155);transform-origin:0 50%;">New</div>
<div class="abs" style="left:73.5px;top:43.2px"><svg width="6" height="7.2" viewBox="0 0 6 7.2" fill="none" stroke-width="1.3" stroke-linecap="round" stroke-linejoin="round"><path d="M0.7 0.7 L5.4 3.6 L0.7 6.5 Z" stroke="#b4b6ba"/></svg></div>
<div class="abs" style="left:87px;top:37.8px;font-size:13.5px;line-height:18px;height:18px;color:#b4b6ba;white-space:nowrap;letter-spacing:-0.400px;transform:scaleX(0.9489);transform-origin:0 50%;">Enable</div>
<div class="abs" style="left:140.5px;top:43.2px"><svg width="6.6" height="7.2" viewBox="0 0 6.6 7.2" fill="none" stroke-width="1.3" stroke-linecap="round" stroke-linejoin="round"><path d="M1 0.6 V6.6 M5.6 0.6 V6.6" stroke="#b4b6ba" stroke-width="1.6"/></svg></div>
<div class="abs" style="left:155px;top:37.8px;font-size:13.5px;line-height:18px;height:18px;color:#b4b6ba;white-space:nowrap;letter-spacing:-0.400px;transform:scaleX(0.9617);transform-origin:0 50%;">Disable</div>
<div class="abs" style="left:210.5px;top:42.8px"><svg width="8.4" height="8.4" viewBox="0 0 8.4 8.4" fill="none" stroke-width="1.3" stroke-linecap="round" stroke-linejoin="round"><path d="M0.7 0.7 L7.7 7.7 M7.7 0.7 L0.7 7.7" stroke="#b4b6ba" stroke-width="1.5"/></svg></div>
<div class="abs" style="left:227px;top:37.8px;font-size:13.5px;line-height:18px;height:18px;color:#b4b6ba;white-space:nowrap;letter-spacing:-0.400px;transform:scaleX(0.9010);transform-origin:0 50%;">Remove</div>
<div class="abs" style="left:285px;top:41.8px"><svg width="10" height="10" viewBox="0 0 10 10" fill="none" stroke-width="1.7" stroke-linecap="round" stroke-linejoin="round"><circle cx="4" cy="4" r="3.1" stroke="#3b3f45"/><path d="M6.4 6.4 L9.4 9.4" stroke="#3b3f45"/></svg></div>
<div class="abs" style="left:302px;top:37.8px;font-size:13.5px;line-height:18px;height:18px;color:#25272b;white-space:nowrap;letter-spacing:-0.400px;transform:scaleX(0.9176);transform-origin:0 50%;">Find</div>
<div class="abs" style="left:339px;top:41.8px"><svg width="10" height="10" viewBox="0 0 10 10" fill="none" stroke-width="1.5" stroke-linecap="round" stroke-linejoin="round"><path d="M0.8 0.8 H9.2 L5.9 4.8 V9 L4.1 7.8 V4.8 Z" stroke="#3b3f45"/></svg></div>
<div class="abs" style="left:356px;top:37.8px;font-size:13.5px;line-height:18px;height:18px;color:#25272b;white-space:nowrap;letter-spacing:-0.400px;transform:scaleX(0.9643);transform-origin:0 50%;">Filter</div>
<div class="abs" style="left:397px;top:41.8px"><svg width="11" height="10" viewBox="0 0 11 10" fill="none" stroke-width="1.4" stroke-linecap="round" stroke-linejoin="round"><path d="M0.8 0.8 H7.6 L5 4 V8.6 L3.6 7.6 V4 Z" stroke="#3b3f45"/><path d="M8 4.6 H10.4 M8 6.8 H10.4 M8 9 H10.4" stroke="#3b3f45"/></svg></div>
<div class="abs" style="left:416px;top:38.6px;font-size:13.5px;line-height:18px;height:18px;color:#25272b;white-space:nowrap;letter-spacing:-0.400px;transform:scaleX(0.9437);transform-origin:0 50%;">all</div>
<div class="abs" style="left:434px;top:46.3px"><svg width="6.6" height="4.2" viewBox="0 0 6.6 4.2" fill="none" stroke-width="1.3" stroke-linecap="round" stroke-linejoin="round"><path d="M0.7 0.8 L3.3 3.4 L5.9 0.8" stroke="#3b3f45" stroke-width="1.4"/></svg></div>
<div class="abs" style="left:0px;top:61.5px;width:437.5px;height:24px;background:#e7e8ea;border-bottom:1px solid #dcdde0;"></div>
<div class="abs" style="left:423px;top:61.5px;width:14.5px;height:24px;background:#ececee;border-left:1px solid #dcdde0;"></div>
<div class="abs" style="left:25.5px;top:61.5px;width:1px;height:24px;background:#dddee1;"></div>
<div class="abs" style="left:67.5px;top:61.5px;width:1px;height:24px;background:#dddee1;"></div>
<div class="abs" style="left:97.5px;top:61.5px;width:1px;height:24px;background:#dddee1;"></div>
<div class="abs" style="left:151px;top:61.5px;width:1px;height:24px;background:#dddee1;"></div>
<div class="abs" style="left:219.5px;top:61.5px;width:1px;height:24px;background:#dddee1;"></div>
<div class="abs" style="left:295.5px;top:61.5px;width:1px;height:24px;background:#dddee1;"></div>
<div class="abs" style="left:370px;top:61.5px;width:1px;height:24px;background:#dddee1;"></div>
<div class="abs" style="left:7px;top:67px;width:12.5px;height:13px;background:#fff;border:1px solid #dadbde;border-radius:3.5px;"></div>
<div class="abs" style="left:33px;top:65.3px;font-size:13px;line-height:17px;height:17px;color:#25272b;white-space:nowrap;-webkit-text-stroke:0.45px #25272b;">#</div>
<div class="abs" style="left:57.5px;top:71.4px"><svg width="7.6" height="5" viewBox="0 0 7.6 5" fill="none" stroke-width="1.3" stroke-linecap="round" stroke-linejoin="round"><path d="M0.8 4 L3.8 1 L6.8 4" stroke="#4a4d52" stroke-width="1.5"/></svg></div>
<div class="abs" style="left:76px;top:67.8px"><svg width="10" height="12" viewBox="0 0 10 12" fill="none" stroke-width="1.5" stroke-linecap="round" stroke-linejoin="round"><path d="M1 0.8 V11.4 M1 1.2 L8.8 4.2 L1 7.2" stroke="#3b3f45"/></svg></div>
<div class="abs" style="left:105px;top:65.3px;font-size:13px;line-height:17px;height:17px;color:#25272b;white-space:nowrap;-webkit-text-stroke:0.45px #25272b;letter-spacing:0.272px;">Action</div>
<div class="abs" style="left:158px;top:65.3px;font-size:13px;line-height:17px;height:17px;color:#25272b;white-space:nowrap;-webkit-text-stroke:0.45px #25272b;letter-spacing:-0.367px;">Chain</div>
<div class="abs" style="left:227px;top:65.3px;font-size:13px;line-height:17px;height:17px;color:#25272b;white-space:nowrap;-webkit-text-stroke:0.45px #25272b;letter-spacing:-0.400px;">Src. Addre...</div>
<div class="abs" style="left:302px;top:65.3px;font-size:13px;line-height:17px;height:17px;color:#25272b;white-space:nowrap;-webkit-text-stroke:0.45px #25272b;letter-spacing:-0.379px;">Dst. Addre...</div>
<div class="abs" style="left:377px;top:65.3px;font-size:13px;line-height:17px;height:17px;color:#25272b;white-space:nowrap;-webkit-text-stroke:0.45px #25272b;letter-spacing:-0.400px;transform:scaleX(0.9453);transform-origin:0 50%;">Src. A...</div>
<div class="abs" style="left:427.5px;top:70.3px"><svg width="7.2" height="7" viewBox="0 0 7.2 7" fill="none" stroke-width="1.3" stroke-linecap="round" stroke-linejoin="round"><path d="M0.6 0.8 H6.6 M0.6 3.4 H6.6 M0.6 6 H6.6" stroke="#8b8d92" stroke-width="1.1"/></svg></div>
<div class="abs" style="left:0px;top:85.5px;width:437.5px;height:272.5px;background:#fff;"></div>
<div class="abs" style="left:25.5px;top:85.5px;width:1px;height:24px;background:#e6e7e9;"></div>
<div class="abs" style="left:67.5px;top:85.5px;width:1px;height:24px;background:#e6e7e9;"></div>
<div class="abs" style="left:97.5px;top:85.5px;width:1px;height:24px;background:#e6e7e9;"></div>
<div class="abs" style="left:151px;top:85.5px;width:1px;height:24px;background:#e6e7e9;"></div>
<div class="abs" style="left:219.5px;top:85.5px;width:1px;height:24px;background:#e6e7e9;"></div>
<div class="abs" style="left:295.5px;top:85.5px;width:1px;height:24px;background:#e6e7e9;"></div>
<div class="abs" style="left:370px;top:85.5px;width:1px;height:24px;background:#e6e7e9;"></div>
<div class="abs" style="left:423px;top:85.5px;width:1px;height:24px;background:#e6e7e9;"></div>
<div class="abs" style="left:0px;top:109.3px;width:424px;height:1px;background:#e6e7e9;"></div>
<div class="abs" style="left:7px;top:91.5px;width:12.5px;height:13px;background:#f3f3f4;border:1px solid #e2e3e5;border-radius:3.5px;"></div>
<div class="abs" style="left:33px;top:94px"><svg width="4.6" height="7.2" viewBox="0 0 4.6 7.2" fill="none" stroke-width="1.3" stroke-linecap="round" stroke-linejoin="round"><path d="M0 0 H1.7 V1.7 H0 Z M2.9 0 H4.6 V1.7 H2.9 Z M0 2.75 H1.7 V4.45 H0 Z M2.9 2.75 H4.6 V4.45 H2.9 Z M0 5.5 H1.7 V7.2 H0 Z M2.9 5.5 H4.6 V7.2 H2.9 Z" fill="#3b3f45" stroke="none"/></svg></div>
<div class="abs" style="left:55.5px;top:89.1px;font-size:13px;line-height:17px;height:17px;color:#25272b;white-space:nowrap;">0</div>
<div class="abs" style="left:105px;top:93.1px"><svg width="10.4" height="9" viewBox="0 0 10.4 9" fill="none" stroke-width="1.5" stroke-linecap="round" stroke-linejoin="round"><path d="M0.8 5.8 H4.6 L9.2 1.4 M5.8 1 H9.5 V4.6 M4.6 5.8 L6.6 8.2" stroke="#2d8fe3"/></svg></div>
<div class="abs" style="left:121px;top:89.1px;font-size:13px;line-height:17px;height:17px;color:#25272b;white-space:nowrap;letter-spacing:-0.400px;transform:scaleX(0.9155);transform-origin:0 50%;">ma...</div>
<div class="abs" style="left:158px;top:89.1px;font-size:13px;line-height:17px;height:17px;color:#25272b;white-space:nowrap;letter-spacing:-0.081px;">srcnat</div>
<div class="abs" style="left:7px;top:351.5px;width:176px;height:3.5px;background:#e4e5e7;border-radius:2px;"></div>
<div class="abs" style="left:0px;top:358px;width:437.5px;height:26px;background:#fff;border-top:1px solid #e3e4e6;"></div>
<div class="abs" style="left:6.7px;top:363px;width:24px;height:16.3px;background:#e5e6e8;border-radius:6px;"></div>
<div class="abs" style="left:14.5px;top:362.7px;font-size:13px;line-height:17px;height:17px;color:#25272b;white-space:nowrap;">1</div>
<div class="abs" style="left:38.3px;top:358px;width:1px;height:26px;background:#e0e1e3;"></div>
<div class="abs" style="left:103.3px;top:358px;width:1px;height:26px;background:#e0e1e3;"></div>
<div class="abs" style="left:54.8px;top:367px"><svg width="6.8" height="7.6" viewBox="0 0 6.8 7.6" fill="none" stroke-width="1.5" stroke-linecap="round" stroke-linejoin="round"><path d="M0.8 0.8 L6 3.8 L0.8 6.8 Z" stroke="#3b3f45"/></svg></div>
<div class="abs" style="left:69.5px;top:362.3px;font-size:13px;line-height:17px;height:17px;color:#25272b;white-space:nowrap;letter-spacing:-0.400px;transform:scaleX(0.9488);transform-origin:0 50%;">Live</div>
<div class="abs" style="left:437.5px;top:32.5px;width:139px;height:351.5px;background:#e6e7e9;box-shadow:-1px 0 2px rgba(0,0,0,.07);"><div class="abs" style="left:16px;top:16px"><svg width="14" height="15.4" viewBox="0 0 14 15.4" fill="none" stroke-width="1.4" stroke-linecap="round" stroke-linejoin="round"><path d="M5 0.8 H12.4 L9.4 5.6 H13.4 L4.4 14.6 L6 8.6 H2.4 Z" stroke="#3b3f45"/><path d="M1.6 10.6 L0.6 13.2 M3.2 13 L2.6 15" stroke="#3b3f45"/></svg></div><div class="abs" style="left:36.5px;top:16px;font-size:13.5px;line-height:18px;height:18px;color:#1a1c1f;white-space:nowrap;-webkit-text-stroke:0.45px #1a1c1f;letter-spacing:-0.047px;">Actions</div><div class="abs" style="left:17.5px;top:44.2px;font-size:13px;line-height:17px;height:17px;color:#b1b3b7;white-space:nowrap;letter-spacing:-0.333px;">Reset Counters</div><div class="abs" style="left:17.5px;top:68.2px;font-size:13px;line-height:17px;height:17px;color:#2b2d31;white-space:nowrap;letter-spacing:-0.334px;">Reset All Counters</div></div></div>
<div class="abs" style="left:146px;top:55px;width:553px;height:558px;background:#fff;box-shadow:0 0 13px rgba(0,0,0,.33)"><div class="abs" style="left:0px;top:0px;width:553px;height:32px;background:#c5dff5;"><div class="abs" style="left:7px;top:6.5px"><svg width="18" height="17.6" viewBox="0 0 18 17.6" fill="none" stroke-width="1.3" stroke-linecap="round" stroke-linejoin="round"><rect x="0.8" y="0.8" width="16.4" height="16" rx="3" stroke="#2d8fe3" stroke-width="1.6" fill="#d7eafa"/><path d="M3.8 4.8 L5.6 6.4 L3.8 8 M7.6 6.4 H12.6" stroke="#2a2d32" stroke-width="1.5"/></svg></div><div class="abs" style="left:29px;top:7px;font-size:13.5px;line-height:18px;height:18px;color:#15171a;white-space:nowrap;-webkit-text-stroke:0.45px #15171a;letter-spacing:-0.074px;">Terminal</div><div class="abs" style="left:505.5px;top:12px"><svg width="8" height="8" viewBox="0 0 8 8" fill="none" stroke-width="1.3" stroke-linecap="round" stroke-linejoin="round"><path d="M4.4 0.7 H7.3 V3.6 M3.6 7.3 H0.7 V4.4" stroke="#3b3f45" stroke-width="1.6" stroke-linejoin="miter"/></svg></div><div class="abs" style="left:534px;top:12px"><svg width="8" height="8" viewBox="0 0 8 8" fill="none" stroke-width="1.3" stroke-linecap="round" stroke-linejoin="round"><path d="M0.7 0.7 L7.3 7.3 M7.3 0.7 L0.7 7.3" stroke="#2a2d32" stroke-width="1.6"/></svg></div></div><div id="termbody" class="abs">
<pre class="tl" style="top:-2px">[<span class="c">admin</span>@<span class="g">jovian ekasakta</span>] &gt; </pre>
<pre class="tl" style="top:14px">[<span class="c">admin</span>@<span class="g">jovian ekasakta</span>] &gt; </pre>
<pre class="tl" style="top:30px">[<span class="c">admin</span>@<span class="g">jovian ekasakta</span>] &gt; </pre>
<pre class="tl" style="top:46px">[<span class="c">admin</span>@<span class="g">jovian ekasakta</span>] &gt; </pre>
<pre class="tl" style="top:62px">[<span class="c">admin</span>@<span class="g">jovian ekasakta</span>] &gt; </pre>
<pre class="tl" style="top:78px">[<span class="c">admin</span>@<span class="g">jovian ekasakta</span>] &gt; </pre>
<pre class="tl" style="top:94px">[<span class="c">admin</span>@<span class="g">jovian ekasakta</span>] &gt; </pre>
<pre class="tl" style="top:110px">[<span class="c">admin</span>@<span class="g">jovian ekasakta</span>] &gt; </pre>
<pre class="tl" style="top:126px">[<span class="c">admin</span>@<span class="g">jovian ekasakta</span>] &gt; </pre>
<pre class="tl" style="top:142px">[<span class="c">admin</span>@<span class="g">jovian ekasakta</span>] &gt; </pre>
<pre class="tl" style="top:158px">[<span class="c">admin</span>@<span class="g">jovian ekasakta</span>] &gt; </pre>
<pre class="tl" style="top:174px">[<span class="c">admin</span>@<span class="g">jovian ekasakta</span>] &gt; </pre>
<pre class="tl" style="top:190px">[<span class="c">admin</span>@<span class="g">jovian ekasakta</span>] &gt; </pre>
<pre class="tl" style="top:206px">[<span class="c">admin</span>@<span class="g">jovian ekasakta</span>] &gt; </pre>
<pre class="tl" style="top:222px">[<span class="c">admin</span>@<span class="g">jovian ekasakta</span>] &gt; </pre>
<pre class="tl" style="top:238px">[<span class="c">admin</span>@<span class="g">jovian ekasakta</span>] &gt; </pre>
<pre class="tl" style="top:254px">[<span class="c">admin</span>@<span class="g">jovian ekasakta</span>] &gt; </pre>
<pre class="tl" style="top:270px">[<span class="c">admin</span>@<span class="g">jovian ekasakta</span>] &gt; <span class="c">/interface</span> <span class="m">print</span></pre>
<pre class="tl" style="top:286px">Flags: R - <b>RUNNING</b></pre>
<pre class="tl" style="top:302px">Columns: <b>NAME</b>, <b>TYPE</b>, <b>ACTUAL-MTU</b>, <b>MAC-ADDRESS</b></pre>
<pre class="tl" style="top:318px"><b>#   NAME    TYPE      ACTUAL-MTU  MAC-ADDRESS</b></pre>
<pre class="tl" style="top:334px">0 R ether1  ether           1500  0C:80:F7:EC:00:00</pre>
<pre class="tl" style="top:350px">1   ether2  ether           1500  0C:80:F7:EC:00:01</pre>
<pre class="tl" style="top:366px">2   ether3  ether           1500  0C:80:F7:EC:00:02</pre>
<pre class="tl" style="top:382px">3   ether4  ether           1500  0C:80:F7:EC:00:03</pre>
<pre class="tl" style="top:398px">4 R lo      loopback       65536  00:00:00:00:00:00</pre>
<pre class="tl" style="top:414px">[<span class="c">admin</span>@<span class="g">jovian ekasakta</span>] &gt; <span class="c">/ip</span> <span class="r">firewwall</span> nat add chain<span class="y">=</span>srcnat action<span class="y">=</span>masquerad</pre>
<pre class="tl" style="top:430px">e out-interface<span class="y">=</span>ether1</pre>
<pre class="tl" style="top:446px">bad command name firewwall (line 1 column 5)</pre>
<pre class="tl" style="top:462px">[<span class="c">admin</span>@<span class="g">jovian ekasakta</span>] &gt; <span class="c">/ip firewall nat</span> <span class="m">add</span> <span class="g">chain</span><span class="y">=</span>srcnat <span class="g">action</span><span class="y">=</span>masquerad</pre>
<pre class="tl" style="top:478px"><span class="g">out-interface</span><span class="y">=</span>ether1</pre>
<pre class="tl" style="top:494px">[<span class="c">admin</span>@<span class="g">jovian ekasakta</span>] &gt; </pre>
<pre class="tl" style="top:510px">[<span class="c">admin</span>@<span class="g">jovian ekasakta</span>] &gt; <span class="c">/user</span> <span class="m">set</span> admin <span class="g">password</span><span class="y">=</span>jovian</pre>
<div class="abs" style="left:546px;top:416px;width:3.5px;height:103px;background:#d4d5d8;border-radius:2px;"></div></div></div>
</div>
<div class="abs" style="left:145px;top:614px;width:1135px;height:58px;background:#eef0f3;border-top:1px solid #cfd1d5;"></div>
<div class="abs" style="left:158px;top:622px"><svg width="18.6" height="17" viewBox="0 0 18.6 17" fill="none" stroke-width="1.5" stroke-linecap="round" stroke-linejoin="round"><rect x="0.8" y="10" width="17" height="6" rx="1.2" stroke="#3b3f45"/><path d="M3.6 13 H5.6" stroke="#3b3f45"/><path d="M10.4 0.8 V9.6 M13.6 0.8 V9.6" stroke="#2d8fe3" stroke-width="1.6"/></svg></div>
<div class="abs" style="left:181px;top:621.8px;font-size:13.5px;line-height:18px;height:18px;color:#1a1c1f;white-space:nowrap;-webkit-text-stroke:0.45px #1a1c1f;letter-spacing:-0.362px;">jovian ekasakta</div>
<div class="abs" style="left:276px;top:622.3px;font-size:13px;line-height:17px;height:17px;color:#2b2d31;white-space:nowrap;letter-spacing:-0.400px;transform:scaleX(0.9817);transform-origin:0 50%;">0C:80:F7:EC:00:00 / x86_64 / CHR QEMU Standard PC (i440FX + PIIX, 1996) / 7.19.4 (stable)</div>
<div class="abs" style="left:791.5px;top:622px"><svg width="17" height="17" viewBox="0 0 17 17" fill="none" stroke-width="1.4" stroke-linecap="round" stroke-linejoin="round"><rect x="3" y="3" width="11" height="11" rx="1.4" stroke="#2d8fe3"/><rect x="6.2" y="6.2" width="4.6" height="4.6" stroke="#3b3f45"/><path d="M5.4 0.6 V3 M8.5 0.6 V3 M11.6 0.6 V3 M5.4 14 V16.4 M8.5 14 V16.4 M11.6 14 V16.4 M0.6 5.4 H3 M0.6 8.5 H3 M0.6 11.6 H3 M14 5.4 H16.4 M14 8.5 H16.4 M14 11.6 H16.4" stroke="#2d8fe3"/></svg></div>
<div class="abs" style="left:817.5px;top:621.8px;font-size:13.5px;line-height:18px;height:18px;color:#1a1c1f;white-space:nowrap;-webkit-text-stroke:0.45px #1a1c1f;letter-spacing:-0.400px;transform:scaleX(0.9045);transform-origin:0 50%;">CPU:</div>
<div class="abs" style="left:856px;top:622.3px;font-size:13px;line-height:17px;height:17px;color:#2b2d31;white-space:nowrap;letter-spacing:-0.400px;transform:scaleX(0.8655);transform-origin:0 50%;">1 %</div>
<div class="abs" style="left:158px;top:648px"><svg width="18.2" height="17" viewBox="0 0 18.2 17" fill="none" stroke-width="1.5" stroke-linecap="round" stroke-linejoin="round"><rect x="3.4" y="1" width="11.4" height="15" rx="2" stroke="#2d8fe3"/><path d="M0.6 4 H3.4 M0.6 8.5 H3.4 M0.6 13 H3.4 M14.8 4 H17.6 M14.8 8.5 H17.6 M14.8 13 H17.6" stroke="#2d8fe3"/></svg></div>
<div class="abs" style="left:182px;top:647.8px;font-size:13.5px;line-height:18px;height:18px;color:#1a1c1f;white-space:nowrap;-webkit-text-stroke:0.45px #1a1c1f;letter-spacing:-0.298px;">Memory Free/Used/Total:</div>
<div class="abs" style="left:336px;top:648.3px;font-size:13px;line-height:17px;height:17px;color:#2b2d31;white-space:nowrap;letter-spacing:-0.400px;transform:scaleX(0.9795);transform-origin:0 50%;">58.0 MiB / 198.0 MiB / 256.0 MiB</div>
<div class="abs" style="left:549.5px;top:647.5px"><svg width="11.6" height="16.8" viewBox="0 0 11.6 16.8" fill="none" stroke-width="1.5" stroke-linecap="round" stroke-linejoin="round"><path d="M0.8 0.8 H10.8 M0.8 16 H10.8 M1.8 0.8 V4 L5.8 8.4 L9.8 4 V0.8 M1.8 16 V12.8 L5.8 8.4 L9.8 12.8 V16" stroke="#3b3f45"/><path d="M3.6 13.6 H8" stroke="#2d8fe3" stroke-width="1.8"/></svg></div>
<div class="abs" style="left:571.6px;top:647.8px;font-size:13.5px;line-height:18px;height:18px;color:#1a1c1f;white-space:nowrap;-webkit-text-stroke:0.45px #1a1c1f;letter-spacing:-0.353px;">Uptime:</div>
<div class="abs" style="left:624.7px;top:648.3px;font-size:13px;line-height:17px;height:17px;color:#2b2d31;white-space:nowrap;letter-spacing:-0.330px;">00:16:07</div>
<div class="abs" style="left:714px;top:647.5px"><svg width="17" height="17" viewBox="0 0 17 17" fill="none" stroke-width="1.5" stroke-linecap="round" stroke-linejoin="round"><path d="M11.2 1.4 A7.8 7.8 0 1 1 3.6 2.8" stroke="#3b3f45"/><path d="M8.5 1 V9 L4.8 11.4" stroke="#2d8fe3"/><path d="M3.2 8.6 H2 M4.6 13 L3.8 13.8 M13 13 L13.6 13.6 M15 8.6 H14.2" stroke="#3b3f45" stroke-width="1"/></svg></div>
<div class="abs" style="left:738px;top:647.8px;font-size:13.5px;line-height:18px;height:18px;color:#1a1c1f;white-space:nowrap;-webkit-text-stroke:0.45px #1a1c1f;letter-spacing:-0.400px;transform:scaleX(0.9615);transform-origin:0 50%;">Date:</div>
<div class="abs" style="left:775.6px;top:648.3px;font-size:13px;line-height:17px;height:17px;color:#2b2d31;white-space:nowrap;letter-spacing:-0.129px;">2025-08-18 05:02:26</div>
<div class="abs" style="left:0px;top:672px;width:1280px;height:47px;background:#19282f;"></div>
<div class="abs" style="left:19.5px;top:686px"><svg width="25" height="21.4" viewBox="0 0 25 21.4" fill="none" stroke-width="1.3" stroke-linecap="round" stroke-linejoin="round"><path d="M7.4 1.6 C4 2.4 1.6 5.6 3 9.4 L8.6 9 C6.6 7 6 4 7.4 1.6 Z" fill="#f5a83c" stroke="none"/><path d="M5.4 21.2 C0.6 21.2 -0.4 14.8 4.4 13.8 C4.8 8.4 12.6 6.6 15 11 C19.4 9.4 22.8 13 21.6 15.6 C25.6 15.6 26 21.2 22 21.2 Z" fill="#d3e0f5" stroke="none"/><path d="M5.4 21.2 C1.6 21.2 0.2 17.4 2.2 15.4 C8 19 17 18.6 23.4 16.4 C25.2 18 24.6 21.2 22 21.2 Z" fill="#a5bde8" stroke="none"/></svg></div>
<div class="abs" style="left:29px;top:679px;width:21px;height:15px;background:#26343a;border-radius:7px;"></div>
<div class="abs" style="left:32px;top:678.6px;font-size:12px;line-height:16px;height:16px;color:#f4f4f4;white-space:nowrap;letter-spacing:-0.400px;transform:scaleX(0.9507);transform-origin:0 50%;">25°</div>
<div class="abs" style="left:183.7px;top:684.5px"><svg width="23.6" height="23.6" viewBox="0 0 23.6 23.6" fill="none" stroke-width="1.3" stroke-linecap="round" stroke-linejoin="round"><defs><linearGradient id="wg" x1="0" y1="0" x2="1" y2="1"><stop offset="0" stop-color="#5fd0ff"/><stop offset="1" stop-color="#1593e6"/></linearGradient></defs><rect x="0" y="0" width="11.2" height="11.2" rx="0.8" fill="url(#wg)"/><rect x="12.4" y="0" width="11.2" height="11.2" rx="0.8" fill="url(#wg)"/><rect x="0" y="12.4" width="11.2" height="11.2" rx="0.8" fill="url(#wg)"/><rect x="12.4" y="12.4" width="11.2" height="11.2" rx="0.8" fill="url(#wg)"/></svg></div>
<div class="abs" style="left:221px;top:680px;width:219.5px;height:31.5px;background:#34434a;border-radius:16px;border:1px solid #43525a;overflow:hidden;"><div class="abs" style="left:166px;top:1.5px"><svg width="53" height="27.5" viewBox="0 0 53 27.5" fill="none" stroke-width="1.3" stroke-linecap="round" stroke-linejoin="round"><defs><clipPath id="sc"><rect x="0" y="0" width="53" height="27.5" rx="13.7"/></clipPath></defs><g clip-path="url(#sc)"><rect x="0" y="0" width="53" height="27.5" fill="#7fc6e8"/><path d="M0 0 H28 V9 C20 6 8 8 0 12 Z" fill="#9fd7f2"/><ellipse cx="9" cy="8" rx="5" ry="1.6" fill="#fff"/><path d="M0 14 C10 10 22 12 27 17 V27.5 H0 Z" fill="#2f9bb0"/><path d="M25 0 H38 V27.5 H22 Z" fill="#8a5a4a"/><path d="M29 0 H33 V14 H29 Z" fill="#c9a9b8"/><path d="M24 14 L30 12 L32 27.5 H22 Z" fill="#d8913a"/><path d="M36 4 C44 0 53 4 53 12 V27.5 H34 Z" fill="#5aa63a"/><circle cx="42" cy="10" r="4.2" fill="#8ccc52"/><circle cx="47" cy="18" r="4.4" fill="#78bd48"/><circle cx="39" cy="20" r="3.6" fill="#96d25e"/></g></svg></div></div>
<div class="abs" style="left:232px;top:687.5px"><svg width="15" height="15" viewBox="0 0 15 15" fill="none" stroke-width="1.6" stroke-linecap="round" stroke-linejoin="round"><circle cx="6.2" cy="6.2" r="5.4" stroke="#f0f0f0"/><path d="M10.2 10.2 L14.4 14.4" stroke="#f0f0f0"/></svg></div>
<div class="abs" style="left:258px;top:686.5px;font-size:14.5px;line-height:19px;height:19px;color:#e6e9ea;white-space:nowrap;letter-spacing:-0.400px;transform:scaleX(0.9442);transform-origin:0 50%;">Search</div>
<div class="abs" style="left:453px;top:685px"><svg width="24" height="21.4" viewBox="0 0 24 21.4" fill="none" stroke-width="1.3" stroke-linecap="round" stroke-linejoin="round"><rect x="6.4" y="0" width="17.6" height="15.4" rx="1.6" fill="#f2f2f2"/><rect x="0" y="6" width="17.6" height="15.4" rx="1.6" fill="#6d6f72"/><rect x="6.4" y="6" width="11.2" height="9.4" fill="#c9c9c9"/></svg></div>
<div class="abs" style="left:497.6px;top:685.5px"><svg width="22.8" height="21" viewBox="0 0 22.8 21" fill="none" stroke-width="1.3" stroke-linecap="round" stroke-linejoin="round"><defs><linearGradient id="cp1" x1="0.6" y1="0" x2="0.3" y2="1"><stop offset="0" stop-color="#2aa6f2"/><stop offset="0.45" stop-color="#3fc98a"/><stop offset="0.8" stop-color="#f3cf3a"/><stop offset="1" stop-color="#f59a3a"/></linearGradient><linearGradient id="cp2" x1="0.7" y1="0" x2="0.3" y2="1"><stop offset="0" stop-color="#6a5cf2"/><stop offset="0.5" stop-color="#d85cc4"/><stop offset="1" stop-color="#f78a4a"/></linearGradient></defs><path d="M11 1 H15 C17 1 17.7 2.6 17.3 4 L16.4 7 H11.6 Z" fill="#2b57d9"/><path d="M6.5 1 H11.5 C12.9 1 13.3 2.2 12.9 3.4 L10 13 C9.6 14.4 8.6 15 7.4 15 H2.6 C1 15 0.4 13.8 0.8 12.4 L3.6 3.4 C4 2 5 1 6.5 1 Z" fill="url(#cp1)"/><path d="M5.6 15 H10.8 L10 17.6 C9.6 19 10.2 20.6 11.6 20.6 H7.8 C5.8 20.6 5.2 19 5.6 17.6 Z" fill="#f5873c"/><path d="M16.2 20.6 H11.2 C9.8 20.6 9.4 19.4 9.8 18.2 L12.6 9 C13 7.6 14 7 15.2 7 H20 C21.6 7 22.2 8.2 21.8 9.6 L19 18.4 C18.6 19.8 17.6 20.6 16.2 20.6 Z" fill="url(#cp2)"/></svg></div>
<div class="abs" style="left:540.5px;top:684.5px"><svg width="25" height="22" viewBox="0 0 25 22" fill="none" stroke-width="1.3" stroke-linecap="round" stroke-linejoin="round"><path d="M0 2 C0 0.9 0.9 0 2 0 H8 L11 3 H23 C24.1 3 25 3.9 25 5 V20 H0 Z" fill="#e9a520"/><rect x="0" y="4.6" width="25" height="17.4" rx="1.6" fill="#fbd45b"/><path d="M4.6 22 V16.6 C4.6 15.5 5.5 14.6 6.6 14.6 H18.4 C19.5 14.6 20.4 15.5 20.4 16.6 V22 Z" fill="#1a78d6"/><rect x="7.4" y="17.2" width="10.2" height="1.7" rx="0.85" fill="#5fb2f5"/></svg></div>
<div class="abs" style="left:549.5px;top:712.5px;width:7px;height:2.5px;background:#9aa3a8;border-radius:1.5px;"></div>
<div class="abs" style="left:585px;top:684px;width:24px;height:24px;background:#101417;border-radius:5px;"><div class="abs" style="left:4.5px;top:6.5px"><svg width="15" height="11.6" viewBox="0 0 15 11.6" fill="none" stroke-width="1.3" stroke-linecap="round" stroke-linejoin="round"><path d="M0.9 0.9 H14.1 V8.6 H5 L2.4 10.6 V8.6 H0.9 Z" stroke="#2fd27a" stroke-width="1.8" fill="#0d3b25"/><rect x="4" y="3.6" width="2.4" height="2" fill="#2fd27a"/><rect x="8.6" y="3.6" width="2.4" height="2" fill="#2fd27a"/></svg></div></div>
<div class="abs" style="left:628.7px;top:684px"><svg width="24.4" height="24.4" viewBox="0 0 24.4 24.4" fill="none" stroke-width="1.3" stroke-linecap="round" stroke-linejoin="round"><defs><linearGradient id="eg1" x1="0" y1="0" x2="1" y2="1"><stop offset="0" stop-color="#35c1f1"/><stop offset="1" stop-color="#0b57b0"/></linearGradient><linearGradient id="eg2" x1="0" y1="0" x2="1" y2="0"><stop offset="0" stop-color="#2bb9e8"/><stop offset="1" stop-color="#6fdc4a"/></linearGradient></defs><circle cx="12.2" cy="12.2" r="12.2" fill="url(#eg1)"/><path d="M0.6 9 C2 3 7 0 12.2 0 C19 0 24.4 5 24.4 11 C24.4 15 21 17 18 17 C15.4 17 14 15.6 14 14.4 C14 13.4 15 13.2 15 11.8 C15 9.6 13 7.6 9.6 7.6 C5.6 7.6 2 10 0.6 14 Z" fill="url(#eg2)"/><path d="M9.6 7.6 C6 9 4.6 13 6 17 C7.6 21.4 12 24 16 24 C10 24.6 3 21 1 15 C0 12 0.4 10 0.6 9 C3 7 7 6.6 9.6 7.6 Z" fill="#0d5bb8"/></svg></div>
<div class="abs" style="left:672.5px;top:683.5px"><svg width="24.6" height="24.2" viewBox="0 0 24.6 24.2" fill="none" stroke-width="1.3" stroke-linecap="round" stroke-linejoin="round"><path d="M7 5 V3.4 C7 1.8 8.2 0.8 9.6 0.8 H15 C16.4 0.8 17.6 1.8 17.6 3.4 V5" stroke="#3aa0e8" stroke-width="1.6" fill="none"/><rect x="0" y="4.6" width="24.6" height="19.6" rx="3" fill="#f3f3f3"/><rect x="7" y="9" width="4.8" height="4.8" fill="#f25022"/><rect x="12.8" y="9" width="4.8" height="4.8" fill="#7fba00"/><rect x="7" y="14.8" width="4.8" height="4.8" fill="#00a4ef"/><rect x="12.8" y="14.8" width="4.8" height="4.8" fill="#ffb900"/></svg></div>
<div class="abs" style="left:717px;top:685px"><svg width="24.4" height="20" viewBox="0 0 24.4 20" fill="none" stroke-width="1.3" stroke-linecap="round" stroke-linejoin="round"><path d="M8 6 L16.6 0.6 L24.4 5.6 V17 C24.4 18.6 23.2 20 21.6 20 H10 Z" fill="#1a6fd0"/><path d="M8 9 H24.4 V17 C24.4 18.6 23.2 20 21.6 20 H8 Z" fill="#35b8f1"/><path d="M12 9 L24.4 16 V9 Z" fill="#1490df"/><rect x="0" y="5" width="13" height="13" rx="2" fill="#0f5cbf"/><circle cx="6.5" cy="11.5" r="3.2" stroke="#fff" stroke-width="1.7" fill="none"/></svg></div>
<div class="abs" style="left:760.7px;top:684px"><svg width="24.4" height="24" viewBox="0 0 24.4 24" fill="none" stroke-width="1.3" stroke-linecap="round" stroke-linejoin="round"><rect x="0" y="0" width="24.4" height="24" rx="2" fill="#3a3d42"/><path d="M4 24 C4 16 10 14 14 12 C18 10 18 6 18 4 H24.4 C24.4 12 20 15 16 17 C13 18.6 12 21 12 24 Z" fill="#f2a62e"/><ellipse cx="8" cy="10" rx="5" ry="3.4" fill="#e5572a"/><rect x="0.6" y="1" width="13" height="8" rx="1.2" fill="#d8d8d8"/><text x="7.1" y="7.8" text-anchor="middle" font-family="Liberation Sans,sans-serif" font-size="7.5" font-weight="bold" fill="#222" stroke="none">x64</text></svg></div>
<div class="abs" style="left:770px;top:712.5px;width:6.5px;height:2.5px;background:#9aa3a8;border-radius:1.5px;"></div>
<div class="abs" style="left:805px;top:685px"><svg width="24" height="24" viewBox="0 0 24 24" fill="none" stroke-width="1.3" stroke-linecap="round" stroke-linejoin="round"><circle cx="12" cy="12" r="12" fill="#dd4b3e"/><path d="M12 12 L1.6 6 A12 12 0 0 0 12 24 L17.2 15 Z" fill="#2da94f"/><path d="M12 12 L17.2 15 L12 24 A12 12 0 0 0 22.4 6 H12 Z" fill="#fbc116"/><path d="M1.6 6 A12 12 0 0 1 22.4 6 H12 L6.8 9 Z" fill="#dd4b3e"/><circle cx="12" cy="12" r="5.6" fill="#fff"/><circle cx="12" cy="12" r="4.4" fill="#4086f4"/></svg></div>
<div class="abs" style="left:820px;top:679px"><svg width="15.2" height="15.2" viewBox="0 0 15.2 15.2" fill="none" stroke-width="1.3" stroke-linecap="round" stroke-linejoin="round"><circle cx="7.6" cy="7.6" r="7.6" fill="#7fa3b3"/><path d="M3.6 3 L5.6 5 H9.6 L11.6 3 V9 C11.6 11.4 9.8 12.6 7.6 12.6 C5.4 12.6 3.6 11.4 3.6 9 Z" fill="#e0a85a"/><path d="M5 11 H10.2 V13.6 H5 Z" fill="#6a4a2a"/></svg></div>
<div class="abs" style="left:815px;top:712.5px;width:6.5px;height:2.5px;background:#9aa3a8;border-radius:1.5px;"></div>
<div class="abs" style="left:841.5px;top:676px;width:39.5px;height:40px;background:#27363d;border-radius:5px;border:1px solid #33424a;"></div>
<div class="abs" style="left:851.5px;top:685.7px"><svg width="19.2" height="20" viewBox="0 0 19.2 20" fill="none" stroke-width="1.3" stroke-linecap="round" stroke-linejoin="round"><defs><linearGradient id="wb2" x1="0.8" y1="0" x2="0.2" y2="1"><stop offset="0" stop-color="#3ea2e2"/><stop offset="0.5" stop-color="#17509c"/><stop offset="1" stop-color="#0a1440"/></linearGradient></defs><rect x="0" y="0" width="19.2" height="20" rx="3.4" fill="url(#wb2)"/><path d="M4.6 7.6 V12.4 L7.4 14.2 L10 12.4 V8.2 M8.6 5 L11.4 4.2 L14.6 6.4 V12.2 L12.6 13.2" stroke="#fff" stroke-width="1.5" fill="none"/></svg></div>
<div class="abs" style="left:853px;top:712px;width:16px;height:3px;background:#4cc2ff;border-radius:1.5px;"></div>
<div class="abs" style="left:892.5px;top:683.8px"><svg width="24.8" height="24.6" viewBox="0 0 24.8 24.6" fill="none" stroke-width="1.3" stroke-linecap="round" stroke-linejoin="round"><path d="M12.4 1.3 C18.6 1.3 23.4 6.2 23.4 12.2 C23.4 18.2 18.6 23.1 12.4 23.1 C10.4 23.1 8.4 22.5 6.8 21.6 L1.8 23 L3.2 18.2 C2.1 16.5 1.4 14.4 1.4 12.2 C1.4 6.2 6.2 1.3 12.4 1.3 Z" stroke="#2ec45a" stroke-width="2.5" fill="none"/><path d="M8 6.6 C6.6 8.6 7.8 11.6 10.2 14 C12.8 16.6 15.8 17.6 17.6 16.2" stroke="#2ec45a" stroke-width="3.2" fill="none"/></svg></div>
<div class="abs" style="left:903.6px;top:678.7px;width:21.6px;height:16.4px;background:#4cc2ff;border-radius:8.2px;"></div>
<div class="abs" style="left:907.5px;top:679.2px;font-size:12px;line-height:16px;height:16px;color:#0b2550;white-space:nowrap;letter-spacing:0.641px;">45</div>
<div class="abs" style="left:902px;top:712.5px;width:6.5px;height:2.5px;background:#9aa3a8;border-radius:1.5px;"></div>
<div class="abs" style="left:995.7px;top:693.5px"><svg width="11.6" height="7" viewBox="0 0 11.6 7" fill="none" stroke-width="1.3" stroke-linecap="round" stroke-linejoin="round"><path d="M0.8 6.4 L5.8 1.2 L10.8 6.4" stroke="#f2f2f2" stroke-width="1.5"/></svg></div>
<div class="abs" style="left:1025px;top:687.5px"><svg width="17" height="17" viewBox="0 0 17 17" fill="none" stroke-width="1.3" stroke-linecap="round" stroke-linejoin="round"><path d="M1 8 C1 3 6 0.6 10.6 2.6 L13 4.6 M13.4 0.8 V4.8 H9.4 M15 9 C15 14 10 16.4 5.4 14.4 L3 12.4 M2.6 16.2 V12.2 H6.6" stroke="#d8dcde" stroke-width="1.2"/><circle cx="12.6" cy="12.4" r="3.6" fill="#f01818" stroke="none"/></svg></div>
<div class="abs" style="left:1060px;top:680.6px;font-size:12px;line-height:16px;height:16px;color:#f2f2f2;white-space:nowrap;letter-spacing:-0.400px;transform:scaleX(0.9320);transform-origin:0 50%;">ENG</div>
<div class="abs" style="left:1064px;top:696.6px;font-size:12px;line-height:16px;height:16px;color:#f2f2f2;white-space:nowrap;letter-spacing:-0.400px;transform:scaleX(0.8911);transform-origin:0 50%;">US</div>
<div class="abs" style="left:1101px;top:690px"><svg width="16.4" height="13" viewBox="0 0 16.4 13" fill="none" stroke-width="1.3" stroke-linecap="round" stroke-linejoin="round"><path d="M0.8 4.4 C5 0 11.4 0 15.6 4.4 M3.2 7 C6 4.2 10.4 4.2 13.2 7 M5.6 9.4 C7 8 9.4 8 10.8 9.4" stroke="#f2f2f2" stroke-width="1.4"/><circle cx="8.2" cy="11.6" r="1.1" fill="#f2f2f2" stroke="none"/></svg></div>
<div class="abs" style="left:1125.5px;top:689px"><svg width="16.4" height="14" viewBox="0 0 16.4 14" fill="none" stroke-width="1.3" stroke-linecap="round" stroke-linejoin="round"><path d="M0.8 4.4 H3.4 L7.2 1 V13 L3.4 9.6 H0.8 Z" stroke="#f2f2f2" stroke-width="1.3"/><path d="M9.4 4.6 C10.4 5.8 10.4 8.2 9.4 9.4" stroke="#f2f2f2" stroke-width="1.2"/><path d="M11.6 2.8 C13.4 5 13.4 9 11.6 11.2" stroke="#7f898e" stroke-width="1.2"/><path d="M13.8 1.2 C16.4 4.4 16.4 9.6 13.8 12.8" stroke="#5a666c" stroke-width="1.2"/></svg></div>
<div class="abs" style="left:1149px;top:691px"><svg width="16.4" height="10" viewBox="0 0 16.4 10" fill="none" stroke-width="1.3" stroke-linecap="round" stroke-linejoin="round"><rect x="0.7" y="0.7" width="13" height="8.6" rx="2" stroke="#f2f2f2" stroke-width="1.3"/><rect x="2.6" y="2.6" width="4" height="4.8" rx="0.6" fill="#f2f2f2" stroke="none"/><path d="M15.4 3.4 V6.6" stroke="#f2f2f2" stroke-width="1.6"/></svg></div>
<div class="abs" style="left:1187px;top:680.2px;font-size:12px;line-height:16px;height:16px;color:#f2f2f2;white-space:nowrap;letter-spacing:-0.125px;">12:02 PM</div>
<div class="abs" style="left:1181.5px;top:696.2px;font-size:12px;line-height:16px;height:16px;color:#f2f2f2;white-space:nowrap;letter-spacing:0.326px;">8/18/2025</div>
<div class="abs" style="left:1246px;top:688.5px"><svg width="13.2" height="14.4" viewBox="0 0 13.2 14.4" fill="none" stroke-width="1.3" stroke-linecap="round" stroke-linejoin="round"><path d="M6.6 0.6 C9.6 0.6 11.2 2.8 11.2 5.4 V9 L12.8 11.6 H0.4 L2 9 V5.4 C2 2.8 3.6 0.6 6.6 0.6 Z" fill="#8adcf8" stroke="none"/><path d="M4.8 12.8 C5 14.4 8.2 14.4 8.4 12.8 Z" fill="#8adcf8" stroke="none"/></svg></div>
</body></html>
